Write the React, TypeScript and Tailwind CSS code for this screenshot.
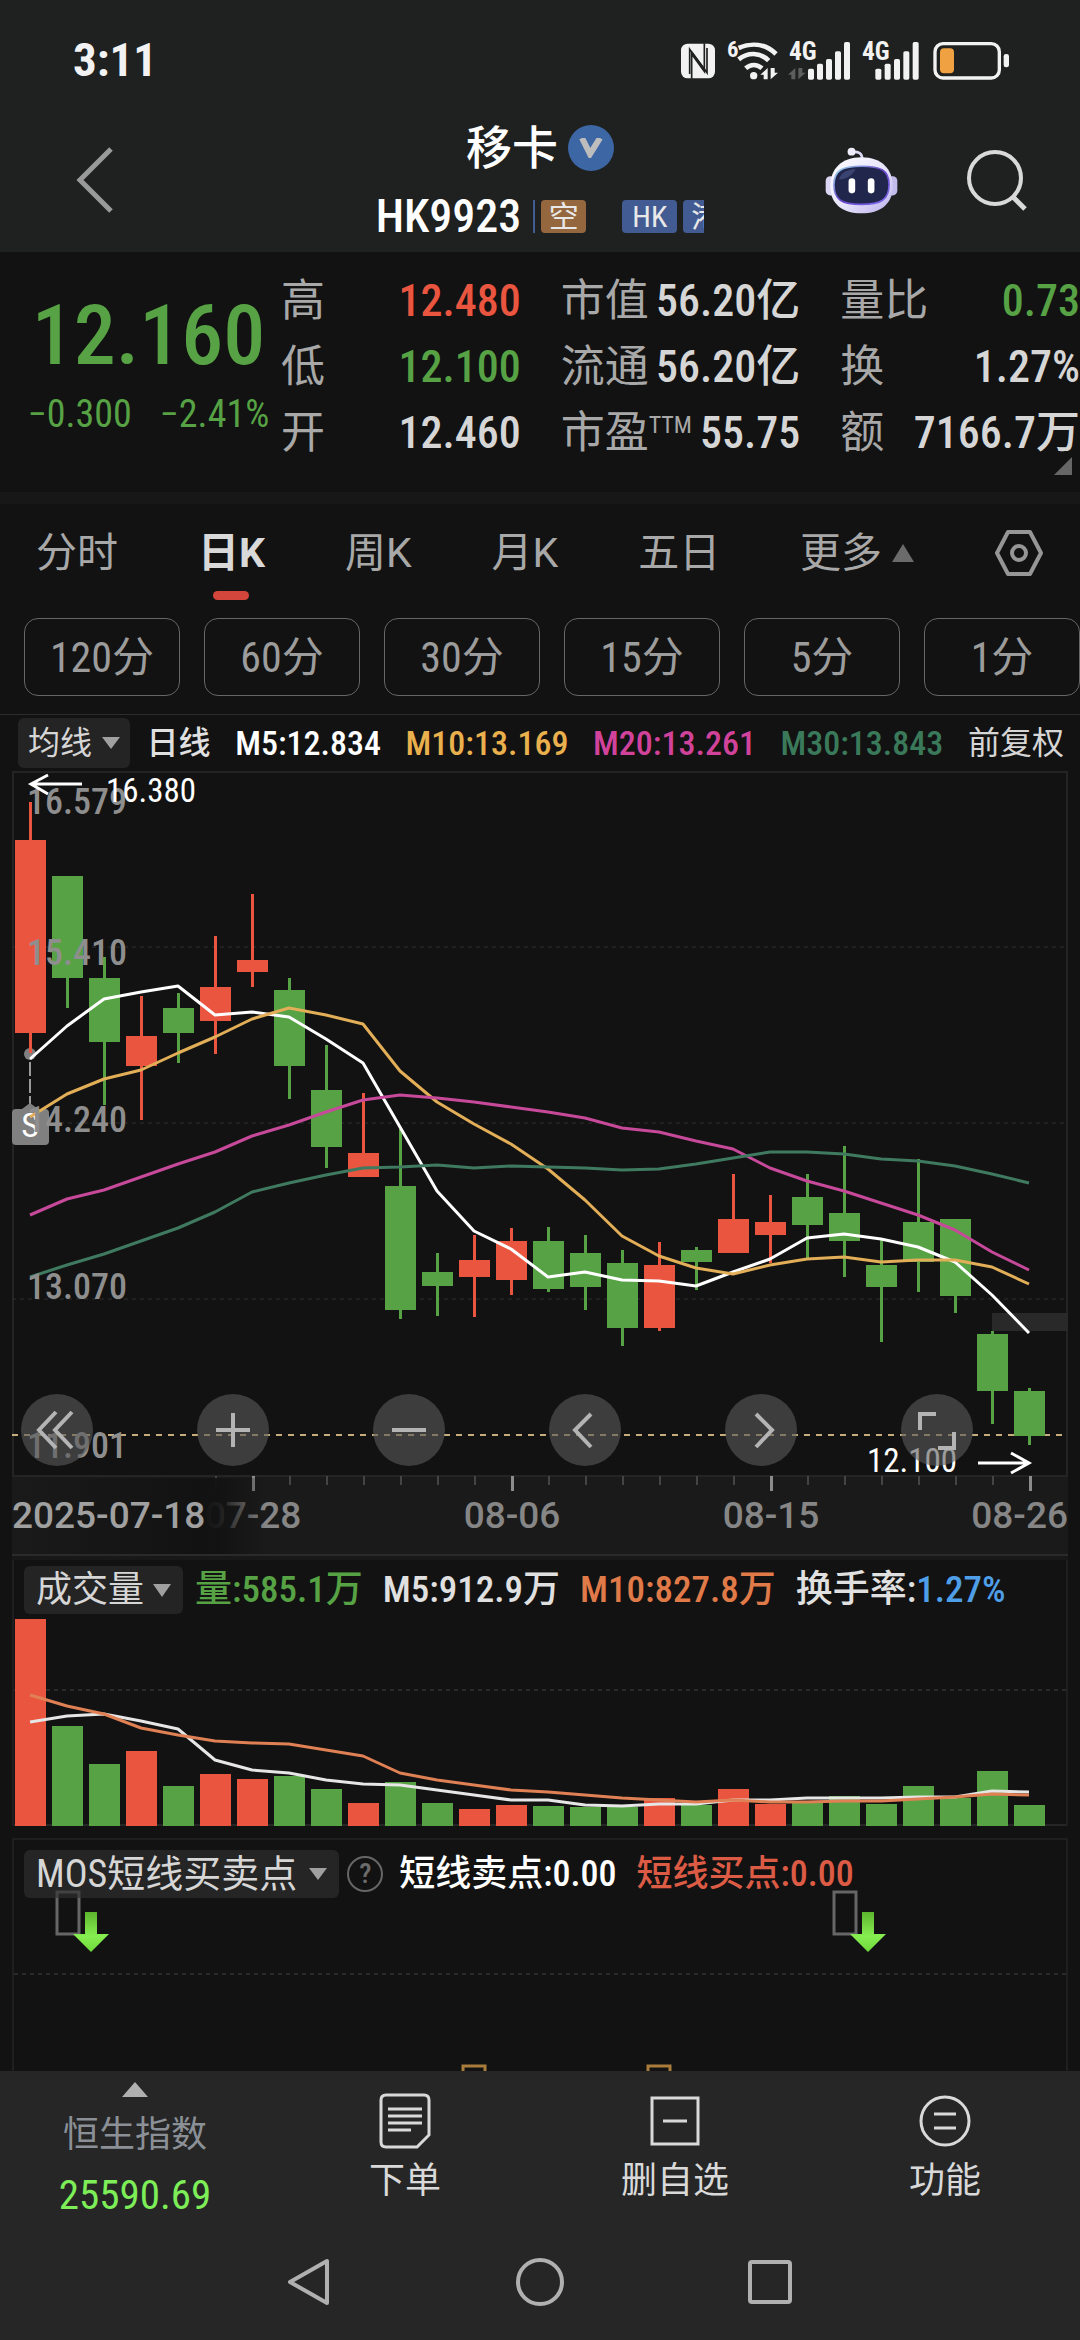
import type { ReactNode } from "react";
import clsx from "clsx";

const UP = "#ea5540";
const DOWN = "#56a244";

// [high, open/close top, open/close bottom, low, rising]
const candles: [number, number, number, number, boolean][] = [
  [802, 840, 1033, 1053, true],
  [876, 876, 978, 1008, false],
  [957, 978, 1042, 1105, false],
  [996, 1036, 1066, 1120, true],
  [993, 1008, 1033, 1063, false],
  [936, 987, 1021, 1054, true],
  [894, 960, 972, 987, true],
  [978, 990, 1066, 1099, false],
  [1045, 1090, 1147, 1168, false],
  [1093, 1153, 1177, 1177, true],
  [1129, 1186, 1310, 1319, false],
  [1253, 1272, 1286, 1316, false],
  [1235, 1260, 1277, 1317, true],
  [1228, 1241, 1280, 1295, true],
  [1227, 1241, 1289, 1292, false],
  [1235, 1253, 1287, 1310, false],
  [1250, 1263, 1328, 1346, false],
  [1242, 1265, 1328, 1331, true],
  [1247, 1250, 1262, 1290, false],
  [1174, 1219, 1253, 1253, true],
  [1195, 1222, 1235, 1263, true],
  [1174, 1197, 1225, 1258, false],
  [1146, 1213, 1241, 1277, false],
  [1240, 1265, 1287, 1342, false],
  [1159, 1222, 1262, 1292, false],
  [1219, 1219, 1296, 1313, false],
  [1331, 1334, 1391, 1424, false],
  [1388, 1391, 1436, 1445, false],
];

const ma5 = [1059, 1026, 999, 992, 986, 1015, 1012, 1017, 1039, 1063, 1127, 1191, 1231, 1249, 1277, 1272, 1280, 1281, 1286, 1272, 1259, 1238, 1234, 1239, 1247, 1262, 1295, 1333];
const ma10 = [1117, 1094, 1079, 1070, 1053, 1037, 1019, 1008, 1015, 1024, 1071, 1102, 1124, 1144, 1169, 1200, 1236, 1256, 1268, 1274, 1265, 1259, 1257, 1262, 1260, 1260, 1267, 1284];
const ma20 = [1215, 1199, 1190, 1177, 1164, 1152, 1136, 1125, 1112, 1100, 1095, 1098, 1102, 1107, 1112, 1118, 1128, 1132, 1141, 1149, 1168, 1181, 1191, 1203, 1215, 1230, 1252, 1270];
const ma30 = [1277, 1265, 1254, 1241, 1228, 1212, 1192, 1183, 1175, 1168, 1167, 1165, 1168, 1166, 1167, 1168, 1170, 1169, 1164, 1158, 1152, 1152, 1154, 1159, 1161, 1166, 1174, 1183];

const volumes = [1619, 1726, 1764, 1751, 1786, 1774, 1779, 1776, 1789, 1803, 1782, 1803, 1809, 1805, 1806, 1807, 1807, 1798, 1805, 1789, 1804, 1803, 1796, 1804, 1786, 1798, 1771, 1805];
const volMa5 = [1722, 1716, 1714, 1721, 1729, 1760, 1770, 1773, 1780, 1784, 1785, 1790, 1795, 1800, 1800, 1805, 1806, 1804, 1804, 1800, 1800, 1798, 1798, 1798, 1797, 1797, 1791, 1792];
const volMa10 = [1695, 1706, 1714, 1728, 1735, 1741, 1743, 1744, 1750, 1756, 1773, 1780, 1785, 1790, 1792, 1795, 1798, 1800, 1802, 1800, 1802, 1802, 1801, 1801, 1799, 1797, 1794, 1795];

const priceLabels = [
  { y: 814, text: "16.579" },
  { y: 965, text: "15.410" },
  { y: 1132, text: "14.240" },
  { y: 1299, text: "13.070" },
  { y: 1458, text: "11.901" },
];

const tabs = ["分时", "日K", "周K", "月K", "五日"];
const periods = ["120分", "60分", "30分", "15分", "5分", "1分"];

const xAt = (i: number) => 30 + i * 37;
const toPoints = (ys: number[]) => ys.map((y, i) => `${xAt(i)},${y}`).join(" ");

const Line = ({ data, color }: { data: number[]; color: string }) => (
  <polyline points={toPoints(data)} fill="none" stroke={color} strokeWidth={3} strokeLinejoin="round" />
);

const Triangle = ({ up = false, className }: { up?: boolean; className: string }) => (
  <svg viewBox="0 0 20 14" preserveAspectRatio="none" className={clsx("shrink-0 fill-current", className)}>
    <path d={up ? "M10 0 20 14H0z" : "M0 0H20L10 14z"} />
  </svg>
);

const StatusIcons = () => (
  <svg viewBox="60 50 990 135" className="h-[45px] w-[330px]" fill="#f2f2f2">
    {/* NFC */}
    <rect x={63} y={67} width={102} height={104} rx={20} />
    <path d="M95 172V98l38 52V66" fill="none" stroke="#1f2120" strokeWidth={5} />
    <path d="M89 158V84l46 62" fill="none" stroke="#1f2120" strokeWidth={5} />
    <path d="M141 80v74l-46-62" fill="none" stroke="#1f2120" strokeWidth={5} />
    {/* wifi */}
    <text x={201} y={108} fontSize={68} fontWeight={700}>6</text>
    <g fill="none" stroke="#f2f2f2" strokeWidth={14}>
      <path d="M236 80c38-16 80-14 112 18" />
      <path d="M236 114c28-22 64-22 90 4" />
      <path d="M257 141c15-13 34-13 49 0" />
    </g>
    <circle cx={281} cy={163} r={11} />
    <path d="M323 140v34h-12v-14h-10zM332 140v34l22-20h-10v-14z" />
    {/* first signal */}
    <text x={387} y={117} fontSize={76} fontWeight={700}>4G</text>
    <path d="M406 140v34h-12v-14h-10zM415 140v34l22-20h-10v-14z" fill="#5d5d5d" />
    {[444, 471, 498, 525, 552].map((x, i) => (
      <rect key={x} x={x} y={[142, 127, 113, 90, 62][i]} width={18} height={[33, 48, 62, 85, 113][i]} rx={5} />
    ))}
    {/* second signal */}
    <text x={606} y={117} fontSize={76} fontWeight={700}>4G</text>
    {[646, 674, 702, 730, 758].map((x, i) => (
      <rect key={x} x={x} y={[142, 127, 113, 90, 62][i]} width={18} height={[33, 48, 62, 85, 113][i]} rx={5} />
    ))}
    {/* battery */}
    <rect x={825} y={67} width={193} height={103} rx={24} fill="none" stroke="#f2f2f2" strokeWidth={10} />
    <rect x={840} y={81} width={42} height={75} rx={12} fill="#f0a142" />
    <rect x={1031} y={98} width={16} height={40} rx={7} />
  </svg>
);

const RobotIcon = () => (
  <svg viewBox="134 70 218 202" className="h-[67px] w-[73px]">
    <defs>
      <linearGradient id="shell" x1="0" y1="0" x2="1" y2="1">
        <stop offset="0" stopColor="#ffffff" />
        <stop offset="0.55" stopColor="#e6e3fb" />
        <stop offset="1" stopColor="#b9aee9" />
      </linearGradient>
      <linearGradient id="rim" x1="0" y1="0" x2="1" y2="1">
        <stop offset="0" stopColor="#9ee0f0" />
        <stop offset="0.5" stopColor="#6a45c8" />
        <stop offset="1" stopColor="#7c6cf0" />
      </linearGradient>
    </defs>
    <path d="M245 106c0-18-10-22-30-21" fill="none" stroke="#dcd8f4" strokeWidth={8} />
    <circle cx={213} cy={84} r={12} fill="#efedfb" />
    <rect x={135} y={158} width={30} height={58} rx={14} fill="#dad6f3" />
    <rect x={321} y={158} width={30} height={58} rx={14} fill="#c3bbec" />
    <path d="M243 101c62 0 94 36 94 88 0 54-38 81-94 81s-94-27-94-81c0-52 32-88 94-88z" fill="url(#shell)" />
    <path d="M243 128c58 0 83 12 83 56 0 45-24 59-83 59s-83-14-83-59c0-44 25-56 83-56z" fill="#20264c" stroke="url(#rim)" strokeWidth={5} />
    <path d="M175 168c6-22 24-30 50-32-8 18-24 30-50 32z" fill="#3b4370" />
    <rect x={204} y={164} width={20} height={46} rx={10} fill="#fff" />
    <rect x={262} y={164} width={20} height={46} rx={10} fill="#fff" />
  </svg>
);

const Header = () => (
  <header className="bg-[#1f2120]">
    <div className="flex h-[120px] items-center justify-between pr-[70px] pl-[73px]">
      <span className="text-[47px] font-bold text-[#f2f2f2]">3:11</span>
      <StatusIcons />
    </div>
    <div className="grid grid-cols-[1fr_auto_1fr] items-center px-[52px] pb-3">
      <button aria-label="返回" className="pl-6">
        <svg viewBox="0 0 38 66" className="h-[66px] w-[38px]" fill="none" stroke="#9a9a9a" strokeWidth={5}>
          <path d="M35 2 4 33l31 31" />
        </svg>
      </button>
      <div>
        <h1 className="flex items-center justify-center gap-[10px] text-[46px] leading-[56px] font-medium text-white">
          移卡
          <span className="flex h-[46px] w-[46px] items-center justify-center rounded-full bg-[#3d66a5]">
            <svg viewBox="0 0 24 20" className="h-5 w-6" fill="none" stroke="#bdbdbd" strokeWidth={6}>
              <path d="M3 0 11 16 21 0" />
            </svg>
          </span>
        </h1>
        <div className="mt-4 flex items-center gap-3">
          <span className="text-[46px] leading-[48px] font-medium text-white">HK9923</span>
          <div className="flex w-[171px] overflow-hidden text-[30px] leading-[33px] text-[#e8e8e8]">
            <span className="w-[2px] shrink-0 bg-[#425b92]" />
            <span className="ml-[6px] w-[45px] shrink-0 rounded-sm bg-[#95673f] text-center">空</span>
            <span className="ml-9 w-[55px] shrink-0 rounded-sm bg-[#425b92] text-center">HK</span>
            <span className="ml-[6px] shrink-0 rounded-sm bg-[#425b92] px-2">港</span>
          </div>
        </div>
      </div>
      <div className="flex items-center justify-end gap-[68px]">
        <button aria-label="智能助手">
          <RobotIcon />
        </button>
        <button aria-label="搜索">
          <svg viewBox="0 0 62 62" className="h-[62px] w-[62px]" fill="none" stroke="#d9d9d9" strokeWidth={4}>
            <circle cx={29} cy={29} r={26} />
            <path d="m47 48 12 12" strokeWidth={5} />
          </svg>
        </button>
      </div>
    </div>
  </header>
);

const Stat = ({ label, value, tone = "text-[#d6d6d6]" }: { label: ReactNode; value: string; tone?: string }) => (
  <div className="flex justify-between">
    <dt className="text-[#a8a8a8]">{label}</dt>
    <dd className={clsx("font-medium", tone)}>{value}</dd>
  </div>
);

const Quote = () => (
  <section className="relative flex pt-4 pb-[26px]">
    <div className="w-[281px] shrink-0 pt-5 pl-4 text-center text-[#56a244]">
      <p className="text-[84px] leading-[96px] font-medium">12.160</p>
      <p className="mt-2 flex justify-center gap-7 text-[38px] leading-[44px]">
        <span>−0.300</span>
        <span>−2.41%</span>
      </p>
    </div>
    <dl className="grid flex-1 grid-cols-3 gap-x-10 text-[44px] leading-[66px] whitespace-nowrap">
      <Stat label="高" value="12.480" tone="text-[#ea5540]" />
      <Stat label="市值" value="56.20亿" />
      <Stat label="量比" value="0.73" tone="text-[#56a244]" />
      <Stat label="低" value="12.100" tone="text-[#56a244]" />
      <Stat label="流通" value="56.20亿" />
      <Stat label="换" value="1.27%" />
      <Stat label="开" value="12.460" />
      <Stat
        label={
          <span className="flex">
            市盈<span className="text-2xl leading-[50px]">TTM</span>
          </span>
        }
        value="55.75"
      />
      <Stat label="额" value="7166.7万" />
    </dl>
    <svg viewBox="0 0 18 18" className="absolute right-2 bottom-[17px] h-[18px] w-[18px]" fill="#666">
      <path d="M18 0v18H0z" />
    </svg>
  </section>
);

const PeriodNav = () => (
  <nav>
    <div className="flex items-start justify-between px-9 pt-[25px] font-['Roboto','Noto_Sans_CJK_SC',sans-serif] text-[41px] leading-[48px] text-[#a8a8a8]">
      {tabs.map((tab) => {
        const active = tab === "日K";
        return (
          <button key={tab} className={clsx("flex flex-col items-center", active && "font-bold text-[#d9d9d9]")}>
            {tab}
            <span className={clsx("mt-[14px] h-[9px] w-9 rounded-full", active && "bg-[#d4453b]")} />
          </button>
        );
      })}
      <button className="flex items-center gap-[10px]">
        更多
        <Triangle up className="h-[18px] w-[22px] text-[#6b6b6b]" />
      </button>
      <button aria-label="设置">
        <svg viewBox="0 0 50 48" className="h-12 w-[50px]" fill="none" stroke="#969696" strokeWidth={4}>
          <path d="M14 3h22l11 21-11 21H14L3 24z" strokeLinejoin="round" />
          <circle cx={25} cy={24} r={7} />
        </svg>
      </button>
    </div>
    <div className="flex gap-6 pt-[18px] pb-[18px] pl-6 text-[42px] text-[#9c9c9c]">
      {periods.map((period) => (
        <button key={period} className="h-[78px] flex-1 rounded-[14px] border border-[#666]">
          {period}
        </button>
      ))}
    </div>
  </nav>
);

const MaLegend = () => (
  <div className="flex items-center justify-between border-t border-[#2c2c2c] pt-[3px] pr-4 pb-[2px] pl-[18px] text-[34px] leading-[50px] font-medium whitespace-nowrap">
    <button className="flex items-center gap-[10px] rounded-md bg-[#242424] px-[10px] text-[32px] font-normal text-[#d6d6d6]">
      均线
      <Triangle className="h-3 w-[18px] text-[#a0a0a0]" />
    </button>
    <span className="-ml-2 text-[#e0e0e0] text-[32px]">日线</span>
    <span className="text-white">M5:12.834</span>
    <span className="text-[#e9b04d]">M10:13.169</span>
    <span className="text-[#d1439b]">M20:13.261</span>
    <span className="text-[#3a7a5a]">M30:13.843</span>
    <span className="text-[32px] font-normal text-[#d6d6d6]">前复权</span>
  </div>
);

const controls = [
  { label: "快退", path: "M35 18 18 36l17 18M51 18 34 36l17 18" },
  { label: "放大", path: "M36 19v34M19 36h34" },
  { label: "缩小", path: "M19 36h34" },
  { label: "左移", path: "M42 20 26 36l16 17" },
  { label: "右移", path: "M31 20 47 36 31 53" },
  { label: "全屏", path: "M19 36V20h16M53 38v16H37" },
];

const PriceChart = () => (
  <div className="relative">
    <svg viewBox="0 770 1080 790" className="block w-full">
      <defs>
        <linearGradient id="axisFade">
          <stop offset="0" stopColor="#1a1a1a" />
          <stop offset="0.75" stopColor="#121212" />
          <stop offset="0.82" stopColor="#121212" stopOpacity={0.9} />
          <stop offset="1" stopColor="#121212" stopOpacity={0} />
        </linearGradient>
      </defs>
      <rect x={13} y={772} width={1054} height={704} fill="none" stroke="#242424" strokeWidth={2} />
      {[947, 1123, 1299].map((y) => (
        <path key={y} d={`M12 ${y}H1066`} stroke="#2e2e2e" strokeDasharray="4 4" />
      ))}
      <rect x={992} y={1313} width={76} height={18} fill="#292929" />
      <path d="M12 1435H1064" stroke="#c4ac7c" strokeWidth={2} strokeDasharray="6 6" />

      {/* sell marker */}
      <circle cx={30} cy={1054} r={6} fill="#808080" />
      <path d="M30 1062v42" stroke="#9a9a9a" strokeWidth={2} strokeDasharray="14 3" />
      <path d="M22 1109l8-6 8 6z" fill="#808080" />
      <rect x={12} y={1109} width={37} height={36} rx={4} fill="#808080" />
      <text x={30} y={1137} textAnchor="middle" fontSize={34} fill="#fff">S</text>

      {candles.map(([high, top, bottom, low, rising], i) => (
        <g key={i} fill={rising ? UP : DOWN}>
          <rect x={xAt(i) - 1} y={high} width={3} height={low - high} />
          <rect x={xAt(i) - 15} y={top} width={31} height={bottom - top} />
        </g>
      ))}
      <Line data={ma5} color="#ffffff" />
      <Line data={ma10} color="#e2ae57" />
      <Line data={ma20} color="#c7499a" />
      <Line data={ma30} color="#3f7a60" />

      <g fontSize={36} fontWeight={500} fill="#8e8e8e">
        {priceLabels.map(({ y, text }) => (
          <text key={text} x={27} y={y}>{text}</text>
        ))}
      </g>
      <g fontSize={33} fill="#fff">
        <text x={106} y={802}>16.380</text>
        <text x={867} y={1472}>12.100</text>
      </g>
      <g fill="none" stroke="#fff" strokeWidth={3}>
        <path d="M82 784H31M48 775l-17 9 17 10" />
        <path d="M978 1463h51M1011 1453l18 10-18 10" />
      </g>

      {/* date axis */}
      <rect x={12} y={1477} width={1056} height={77} fill="#1a1a1a" />
      {candles.map((_, i) => {
        const major = i % 7 === 6;
        return i > 4 && (
          <rect key={i} x={xAt(i)} y={1476} width={major ? 3 : 2} height={major ? 15 : 9} fill={major ? "#8c8c8c" : "#444"} />
        );
      })}
      <g fontSize={37} fontWeight={500} fill="#868686" className="font-[Roboto]">
        <text x={253} y={1528} textAnchor="middle">07-28</text>
        <text x={512} y={1528} textAnchor="middle">08-06</text>
        <text x={771} y={1528} textAnchor="middle">08-15</text>
        <text x={1068} y={1528} textAnchor="end">08-26</text>
        <rect x={12} y={1478} width={254} height={82} fill="url(#axisFade)" />
        <text x={12} y={1528} fill="#a0a0a0">2025-07-18</text>
      </g>
      <path d="M12 1555H1068" stroke="#2a2a2a" strokeWidth={2} />
      <path d="M12 1558H1068" stroke="#181818" strokeWidth={4} />
    </svg>
    <div className="absolute top-[79%] left-[21px] flex gap-[104px]">
      {controls.map(({ label, path }) => (
        <button key={label} aria-label={label} className="h-[72px] w-[72px] rounded-full bg-[#5a5a5a]/60">
          <svg viewBox="0 0 72 72" fill="none" stroke="#b4b4b4" strokeWidth={4}>
            <path d={path} />
          </svg>
        </button>
      ))}
    </div>
  </div>
);

const VolumeChart = () => (
  <section className="mx-3 border-x-2 border-[#1f1f1f]">
    <div className="flex items-center gap-5 pt-[6px] pb-1 pl-[10px] text-[37px] leading-[48px] font-medium whitespace-nowrap">
      <button className="-mr-2 flex items-center gap-[9px] rounded-md bg-[#242424] px-3 text-[36px] font-normal text-[#d6d6d6]">
        成交量
        <Triangle className="h-[13px] w-[18px] text-[#a0a0a0]" />
      </button>
      <span className="text-[#56a244]">量:585.1万</span>
      <span className="text-[#e0e0e0]">M5:912.9万</span>
      <span className="text-[#e07a48]">M10:827.8万</span>
      <span className="text-[#e0e0e0]">
        换手率:<span className="text-[#4f9ee8]">1.27%</span>
      </span>
    </div>
    <svg viewBox="14 1618 1052 208" className="block w-full overflow-visible">
      <path d="M14 1690H1066" stroke="#292929" strokeWidth={2} strokeDasharray="4 4" />
      <path d="M14 1825H1066" stroke="#262626" strokeWidth={2} />
      {volumes.map((top, i) => (
        <rect key={i} x={xAt(i) - 15} y={top} width={31} height={1826 - top} fill={candles[i][4] ? UP : DOWN} />
      ))}
      <Line data={volMa5} color="#e6e6e6" />
      <Line data={volMa10} color="#e08055" />
    </svg>
  </section>
);

const MosChart = () => (
  <section className="relative mx-3 mt-3 border-x-2 border-t-2 border-[#1f1f1f]">
    <svg viewBox="14 1840 1052 231" className="block w-full">
      <defs>
        <linearGradient id="arrow" x1="0" y1="0" x2="0" y2="1">
          <stop offset="0" stopColor="#5db52e" />
          <stop offset="0.6" stopColor="#86ee50" />
          <stop offset="1" stopColor="#6fd83a" />
        </linearGradient>
      </defs>
      <path d="M14 1974H1066" stroke="#292929" strokeWidth={2} strokeDasharray="4 4" />
      {[56, 833].map((x) => (
        <g key={x}>
          <rect x={x + 1} y={1892} width={22} height={42} fill="none" stroke="#666" strokeWidth={3} />
          <path d={`M${x + 29} 1912h12v22h12l-18 18-18-18h12z`} fill="url(#arrow)" />
        </g>
      ))}
      {[463, 648].map((x) => (
        <rect key={x} x={x} y={2066} width={22} height={20} fill="none" stroke="#a97c3c" strokeWidth={3} />
      ))}
    </svg>
    <div className="absolute top-[10px] left-[10px] flex items-center text-[36px] leading-[48px] font-medium whitespace-nowrap">
      <button className="flex items-center gap-3 rounded-md bg-[#303030]/65 px-3 text-[38px] font-normal text-[#d6d6d6]">
        MOS短线买卖点
        <Triangle className="h-3 w-[18px] text-[#a0a0a0]" />
      </button>
      <button aria-label="说明" className="ml-2 flex h-9 w-9 items-center justify-center rounded-full border-2 border-[#666] text-[28px] text-[#6b6b6b]">
        ?
      </button>
      <span className="ml-4 text-white">短线卖点:0.00</span>
      <span className="ml-5 text-[#dc5b45]">短线买点:0.00</span>
    </div>
  </section>
);

const BottomItem = ({ label, children }: { label: string; children: ReactNode }) => (
  <button className="flex flex-col items-center pt-[22px] text-[#d9d9d9]">
    <svg viewBox="0 0 56 56" className="h-14 w-14" fill="none" stroke="currentColor" strokeWidth={3}>
      {children}
    </svg>
    <span className="mt-[10px]">{label}</span>
  </button>
);

const BottomBar = () => (
  <footer className="bg-[#262626]">
    <div className="grid grid-cols-4 text-[36px] leading-[44px]">
      <button className="flex flex-col items-center pt-[11px]">
        <Triangle up className="h-[15px] w-[26px] text-[#b0b0b0]" />
        <span className="mt-4 text-[#8b9097]">恒生指数</span>
        <span className="mt-4 text-[41px] text-[#7dee58]">25590.69</span>
      </button>
      <BottomItem label="下单">
        <path d="M9 2h38q5 0 5 5v35L40 54H9q-5 0-5-5V7q0-5 5-5z" />
        <path d="M11 16h34M11 23h34M11 30h34M11 37h23" />
      </BottomItem>
      <BottomItem label="删自选">
        <path d="M5 5h46v46H5zM16 28h24" />
      </BottomItem>
      <BottomItem label="功能">
        <circle cx={28} cy={28} r={24} />
        <path d="M17 21h22M17 35h22" />
      </BottomItem>
    </div>
    <div className="flex justify-center gap-[182px] pt-[41px] pb-[34px]">
      <button aria-label="后退">
        <svg viewBox="0 0 48 48" className="h-12 w-12" fill="none" stroke="#b0b0b0" strokeWidth={4} strokeLinejoin="round">
          <path d="M41 3v42L4 24z" />
        </svg>
      </button>
      <button aria-label="主屏">
        <svg viewBox="0 0 48 48" className="h-12 w-12" fill="none" stroke="#b0b0b0" strokeWidth={4}>
          <circle cx={24} cy={24} r={22} />
        </svg>
      </button>
      <button aria-label="最近任务">
        <svg viewBox="0 0 48 48" className="h-12 w-12" fill="none" stroke="#b0b0b0" strokeWidth={4}>
          <rect x={4} y={4} width={40} height={40} rx={2} />
        </svg>
      </button>
    </div>
  </footer>
);

const App = () => (
  <main className="min-h-screen overflow-hidden bg-[#121212] font-['Roboto_Condensed','Noto_Sans_CJK_SC',sans-serif]">
    <Header />
    <Quote />
    <div className="h-3 bg-[#171717]" />
    <PeriodNav />
    <MaLegend />
    <PriceChart />
    <VolumeChart />
    <MosChart />
    <BottomBar />
  </main>
);

export default App;
